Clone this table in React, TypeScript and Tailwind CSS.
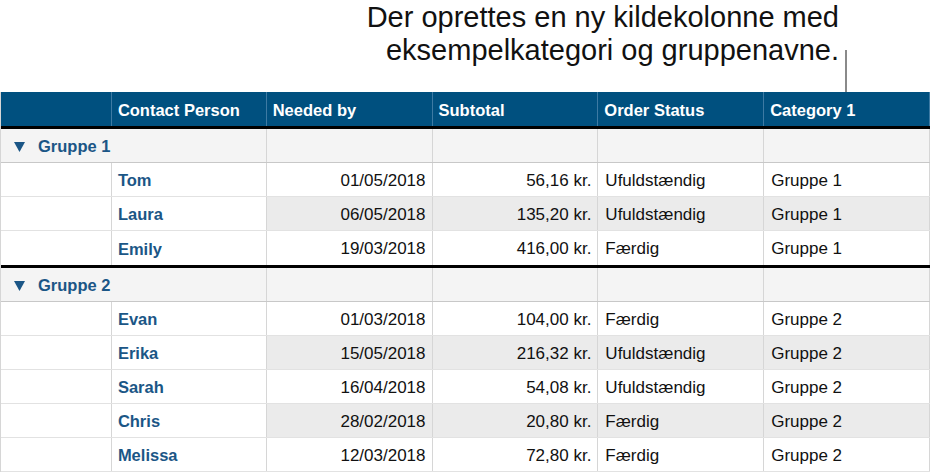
const font = { fontFamily: '"Liberation Sans", Arial, sans-serif' };

type Row = { name: string; date: string; total: string; status: string; cat: string };

const groups: { label: string; rows: Row[] }[] = [
  {
    label: "Gruppe 1",
    rows: [
      { name: "Tom", date: "01/05/2018", total: "56,16 kr.", status: "Ufuldstændig", cat: "Gruppe 1" },
      { name: "Laura", date: "06/05/2018", total: "135,20 kr.", status: "Ufuldstændig", cat: "Gruppe 1" },
      { name: "Emily", date: "19/03/2018", total: "416,00 kr.", status: "Færdig", cat: "Gruppe 1" },
    ],
  },
  {
    label: "Gruppe 2",
    rows: [
      { name: "Evan", date: "01/03/2018", total: "104,00 kr.", status: "Færdig", cat: "Gruppe 2" },
      { name: "Erika", date: "15/05/2018", total: "216,32 kr.", status: "Ufuldstændig", cat: "Gruppe 2" },
      { name: "Sarah", date: "16/04/2018", total: "54,08 kr.", status: "Ufuldstændig", cat: "Gruppe 2" },
      { name: "Chris", date: "28/02/2018", total: "20,80 kr.", status: "Færdig", cat: "Gruppe 2" },
      { name: "Melissa", date: "12/03/2018", total: "72,80 kr.", status: "Færdig", cat: "Gruppe 2" },
    ],
  },
];

function Header() {
  const cols = ["Contact Person", "Needed by", "Subtotal", "Order Status", "Category 1"];
  const widths = ["w-[155px]", "w-[166px]", "w-[166px]", "w-[166px]", "w-[166px]"];
  return (
    <div className="flex h-[34px] bg-[#00507f] text-white font-bold text-[16.5px]">
      <div className="w-[111px] border-r border-[#3d7aa3]" />
      {cols.map((c, i) => (
        <div key={c} className={`${widths[i]} flex items-center pl-[6px] pt-[2px] border-r border-[#3d7aa3]`}>
          {c}
        </div>
      ))}
    </div>
  );
}

function GroupRow({ label, first }: { label: string; first: boolean }) {
  return (
    <div
      className={`flex bg-[#f4f4f4] border-b border-[#c8c8c8] ${
        first ? "h-[34px]" : "h-[37px] border-t-[3px] border-t-black"
      }`}
    >
      <div className="w-[266px] flex items-center pl-[13px] pt-[2px] border-r border-[#d6d6d6] text-[#1b5686] font-bold text-[16.5px]">
        <svg width="11" height="10" viewBox="0 0 11 10" className="mr-[13px]">
          <polygon points="0,0 11,0 5.5,10" fill="#1b5686" />
        </svg>
        {label}
      </div>
      <div className="w-[166px] border-r border-[#d6d6d6]" />
      <div className="w-[166px] border-r border-[#d6d6d6]" />
      <div className="w-[166px] border-r border-[#d6d6d6]" />
      <div className="w-[166px] border-r border-[#d6d6d6]" />
    </div>
  );
}

function DataRow({ row, shade, last }: { row: Row; shade: boolean; last: boolean }) {
  const bg = shade ? "bg-[#ebebeb]" : "bg-white";
  return (
    <div className={`flex h-[34px] ${last ? "" : "border-b border-[#e2e2e2]"} text-[17px] text-[#111]`}>
      <div className="w-[111px] bg-white border-r border-[#d6d6d6]" />
      <div className="w-[155px] bg-white border-r border-[#d6d6d6] flex items-center pl-[6px] pt-[2px] font-bold text-[16.5px] text-[#1b5686]">
        {row.name}
      </div>
      <div className={`w-[166px] ${bg} border-r border-[#d6d6d6] flex items-center justify-end pr-[6px] pt-[2px]`}>
        {row.date}
      </div>
      <div className={`w-[166px] ${bg} border-r border-[#d6d6d6] flex items-center justify-end pr-[6px] pt-[2px]`}>
        {row.total}
      </div>
      <div className={`w-[166px] ${bg} border-r border-[#d6d6d6] flex items-center pl-[7px] pt-[2px]`}>
        {row.status}
      </div>
      <div className={`w-[166px] ${bg} border-r border-[#d6d6d6] flex items-center pl-[7px] pt-[2px]`}>
        {row.cat}
      </div>
    </div>
  );
}

export default function App() {
  return (
    <div className="w-[931px] h-[476px] bg-white overflow-hidden" style={font}>
      <div className="h-[92px] flex justify-end pr-[84px]">
        <p className="text-right text-[29px] leading-[33px] pt-[1px] text-[#111]">
          Der oprettes en ny kildekolonne med
          <br />
          eksempelkategori og gruppenavne.
        </p>
        <div className="w-[2px] h-[42px] self-end ml-[6px] bg-[#8a8a8a]" />
      </div>
      <div className="w-[930px] border-l border-[#d6d6d6]">
        <Header />
        <div className="h-[3px] bg-black" />
        {groups.map((g, gi) => (
          <div key={g.label}>
            <GroupRow label={g.label} first={gi === 0} />
            {g.rows.map((r, i) => (
              <DataRow
                key={r.name}
                row={r}
                shade={i % 2 === 1}
                last={gi === 0 && i === g.rows.length - 1}
              />
            ))}
          </div>
        ))}
      </div>
    </div>
  );
}
